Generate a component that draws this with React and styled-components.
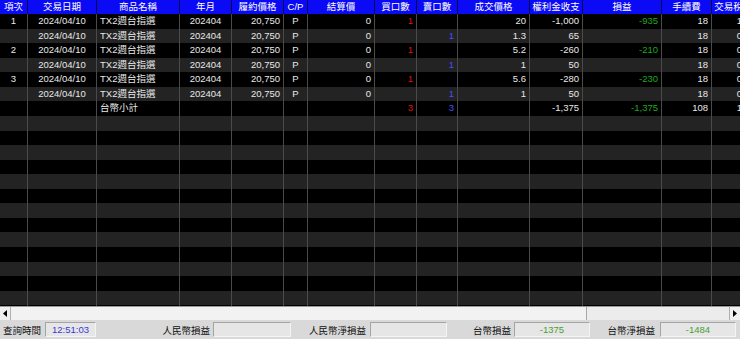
import styled, { createGlobalStyle } from 'styled-components';

const GlobalStyle = createGlobalStyle`
  html, body {
    margin: 0;
    padding: 0;
    background: #000;
  }
  body {
    font-family: "Liberation Sans", "Noto Sans CJK TC", sans-serif;
    font-size: 9.5px;
  }
`;

const COLS = '28px 69px 83px 52px 52px 24px 67px 42px 41px 72px 53px 79px 50px 34px 60px';

const columns = [
  { key: 'no', title: '項次', align: 'center' },
  { key: 'date', title: '交易日期', align: 'center' },
  { key: 'name', title: '商品名稱', align: 'left' },
  { key: 'ym', title: '年月', align: 'center' },
  { key: 'strike', title: '履約價格', align: 'right' },
  { key: 'cp', title: 'C/P', align: 'center' },
  { key: 'settle', title: '結算價', align: 'right' },
  { key: 'buy', title: '買口數', align: 'right', color: '#e01010' },
  { key: 'sell', title: '賣口數', align: 'right', color: '#4c4cff' },
  { key: 'price', title: '成交價格', align: 'right' },
  { key: 'premium', title: '權利金收支', align: 'right' },
  { key: 'pl', title: '損益', align: 'right', color: '#1fa81f' },
  { key: 'fee', title: '手續費', align: 'right' },
  { key: 'tax', title: '交易稅', align: 'right' },
  { key: 'extra', title: '', align: 'right' },
];

const trade = (no, buy, sell, price, premium, pl, tax) => ({
  no,
  date: '2024/04/10',
  name: 'TX2週台指選',
  ym: '202404',
  strike: '20,750',
  cp: 'P',
  settle: '0',
  buy,
  sell,
  price,
  premium,
  pl,
  fee: '18',
  tax,
});

const rows = [
  trade('1', '1', '', '20', '-1,000', '-935', '1'),
  trade('', '', '1', '1.3', '65', '', '0'),
  trade('2', '1', '', '5.2', '-260', '-210', '0'),
  trade('', '', '1', '1', '50', '', '0'),
  trade('3', '1', '', '5.6', '-280', '-230', '0'),
  trade('', '', '1', '1', '50', '', '0'),
  { name: '台幣小計', buy: '3', sell: '3', premium: '-1,375', pl: '-1,375', fee: '108', tax: '1' },
];

const BLANK_ROWS = 15;

const Screen = styled.div`
  width: 740px;
  height: 339px;
  display: flex;
  flex-direction: column;
  overflow: hidden;
  background: #000;
`;

const GridArea = styled.div`
  flex: 0 0 306px;
  overflow: hidden;
  display: flex;
  flex-direction: column;
`;

const HeaderRow = styled.div`
  display: grid;
  grid-template-columns: ${COLS};
  height: 14px;
  background: #0a0af5;
  flex: none;
`;

const HeadCell = styled.div`
  color: #fff;
  text-align: center;
  line-height: 14px;
  white-space: nowrap;
  overflow: visible;
  border-right: 1px solid #06064a;
`;

const Row = styled.div`
  display: grid;
  grid-template-columns: ${COLS};
  height: 14.57px;
  flex: none;
  background: ${(p) => (p.$odd ? '#232323' : '#000')};
`;

const Cell = styled.div`
  color: ${(p) => p.$color || '#e8e8e8'};
  text-align: ${(p) => p.$align};
  padding: ${(p) => (p.$align === 'left' ? '0 0 0 3px' : p.$align === 'right' ? '0 3px 0 0' : '0')};
  line-height: 14.5px;
  white-space: nowrap;
  overflow: hidden;
  border-right: 1px solid #4a4a4a;
`;

const ScrollBar = styled.div`
  flex: 0 0 13px;
  display: flex;
  background: #e4e4e4;
  border-top: 1px solid #9a9a9a;
`;

const ArrowButton = styled.div`
  width: 10px;
  display: flex;
  align-items: center;
  justify-content: center;
  background: #f0f0f0;
  border-right: ${(p) => (p.$side === 'left' ? '1px solid #b0b0b0' : 'none')};
  border-left: ${(p) => (p.$side === 'right' ? '1px solid #b0b0b0' : 'none')};
`;

const Thumb = styled.div`
  width: 575px;
  background: #f2f2f2;
  border-right: 1px solid #a8a8a8;
`;

const Track = styled.div`
  flex: 1;
  background: #ececec;
`;

const Footer = styled.div`
  flex: 1;
  background: #d9d9d9;
  display: flex;
  flex-direction: column;
  gap: 2px;
  padding-top: 2px;
`;

const FooterRow = styled.div`
  display: flex;
  align-items: center;
  height: 15px;
  flex: none;
`;

const Group = styled.div`
  width: ${(p) => p.$w}px;
  display: flex;
  justify-content: ${(p) => (p.$start ? 'flex-start' : 'flex-end')};
  padding-left: ${(p) => (p.$start ? 3 : 0)}px;
  box-sizing: border-box;
  align-items: center;
  gap: ${(p) => p.$gap || 3}px;
`;

const Label = styled.span`
  color: #111;
  white-space: nowrap;
`;

const ValueBox = styled.div`
  width: ${(p) => p.$w}px;
  height: 15px;
  box-sizing: border-box;
  background: #e6e6e6;
  border: 1px solid #a4a4a4;
  border-right-color: #f4f4f4;
  border-bottom-color: #f4f4f4;
  color: ${(p) => p.$color || '#111'};
  text-align: center;
  line-height: 13px;
`;

function Triangle({ dir }) {
  return (
    <svg width="4" height="7" viewBox="0 0 4 7">
      {dir === 'left' ? <polygon points="4,0 4,7 0,3.5" fill="#000" /> : <polygon points="0,0 0,7 4,3.5" fill="#000" />}
    </svg>
  );
}

function App() {
  const blanks = Array.from({ length: BLANK_ROWS }, () => ({}));
  const allRows = [...rows, ...blanks];
  return (
    <>
      <GlobalStyle />
      <Screen>
        <GridArea>
          <HeaderRow>
            {columns.map((c) => (
              <HeadCell key={c.key}>{c.title}</HeadCell>
            ))}
          </HeaderRow>
          {allRows.map((r, i) => (
            <Row key={i} $odd={i % 2 === 1}>
              {columns.map((c) => (
                <Cell key={c.key} $align={c.align} $color={c.color}>
                  {r[c.key]}
                </Cell>
              ))}
            </Row>
          ))}
        </GridArea>
        <ScrollBar>
          <ArrowButton $side="left">
            <Triangle dir="left" />
          </ArrowButton>
          <Thumb />
          <Track />
          <ArrowButton $side="right">
            <Triangle dir="right" />
          </ArrowButton>
        </ScrollBar>
        <Footer>
          <FooterRow>
            <Group $w={96} $gap={4} $start>
              <Label>查詢時間</Label>
              <ValueBox $w={53} $color="#3838d8">12:51:03</ValueBox>
            </Group>
            <Group $w={195}>
              <Label>人民幣損益</Label>
              <ValueBox $w={78} />
            </Group>
            <Group $w={156} $gap={4}>
              <Label>人民幣淨損益</Label>
              <ValueBox $w={77} />
            </Group>
            <Group $w={143}>
              <Label>台幣損益</Label>
              <ValueBox $w={76} $color="#4a9e34">-1375</ValueBox>
            </Group>
            <Group $w={146} $gap={5}>
              <Label>台幣淨損益</Label>
              <ValueBox $w={76} $color="#4a9e34">-1484</ValueBox>
            </Group>
          </FooterRow>
          <FooterRow>
            <Group $w={96} />
            <Group $w={195}>
              <ValueBox $w={78} />
            </Group>
            <Group $w={156}>
              <ValueBox $w={77} />
            </Group>
            <Group $w={143}>
              <ValueBox $w={76} />
            </Group>
            <Group $w={146}>
              <ValueBox $w={76} />
            </Group>
          </FooterRow>
        </Footer>
      </Screen>
    </>
  );
}

export default App;
